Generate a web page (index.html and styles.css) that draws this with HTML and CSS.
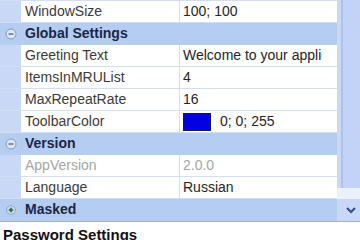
FILE: index.html
```html
<!DOCTYPE html>
<html>
<head>
<meta charset="utf-8">
<link rel="stylesheet" href="styles.css">
</head>
<body>
<div class="pg">
  <div class="top">
    <div class="grid">
      <div class="row">
        <div class="gut"></div>
        <div class="name">WindowSize</div>
        <div class="val">100; 100</div>
      </div>
      <div class="row cat">
        <div class="gut"><svg class="tog" width="12" height="12" viewBox="0 0 12 12"><circle cx="6" cy="6" r="5" fill="#dde6f7" stroke="#8596b8"/><path d="M3.5 6h5" stroke="#50627f" stroke-width="1.3"/></svg></div>
        <div class="cname">Global Settings</div>
      </div>
      <div class="row">
        <div class="gut"></div>
        <div class="name">Greeting Text</div>
        <div class="val"><span class="clip">Welcome to your application</span></div>
      </div>
      <div class="row">
        <div class="gut"></div>
        <div class="name">ItemsInMRUList</div>
        <div class="val">4</div>
      </div>
      <div class="row">
        <div class="gut"></div>
        <div class="name">MaxRepeatRate</div>
        <div class="val">16</div>
      </div>
      <div class="row">
        <div class="gut"></div>
        <div class="name">ToolbarColor</div>
        <div class="val"><span class="swatch"></span><span>0; 0; 255</span></div>
      </div>
      <div class="row cat">
        <div class="gut"><svg class="tog" width="12" height="12" viewBox="0 0 12 12"><circle cx="6" cy="6" r="5" fill="#dde6f7" stroke="#8596b8"/><path d="M3.5 6h5" stroke="#50627f" stroke-width="1.3"/></svg></div>
        <div class="cname">Version</div>
      </div>
      <div class="row">
        <div class="gut"></div>
        <div class="name dis">AppVersion</div>
        <div class="val dis">2.0.0</div>
      </div>
      <div class="row">
        <div class="gut"></div>
        <div class="name">Language</div>
        <div class="val">Russian</div>
      </div>
      <div class="row cat">
        <div class="gut"><svg class="tog" width="12" height="12" viewBox="0 0 12 12"><circle cx="6" cy="6" r="4.5" fill="#c6d5ee" stroke="#9aaac6"/><path d="M3.8 6h4.4M6 3.8v4.4" stroke="#2f6a3a" stroke-width="1.6"/></svg></div>
        <div class="cname">Masked</div>
      </div>
    </div>
    <div class="sb">
      <div class="thumb"></div>
      <div class="track"></div>
      <div class="btn"><svg width="12" height="9" viewBox="0 0 12 9"><path d="M2 2l4 4 4-4" fill="none" stroke="#34508c" stroke-width="2.2"/></svg></div>
    </div>
  </div>
  <div class="gap"></div>
  <div class="desc">
    <div class="dtitle">Password Settings</div>
  </div>
</div>
</body>
</html>
```
FILE: styles.css
```css
html, body {
  margin: 0;
  padding: 0;
}
body {
  width: 360px;
  height: 240px;
  overflow: hidden;
  background: #ffffff;
  font-family: "Liberation Sans", Arial, sans-serif;
  font-size: 14px;
}
.pg {
  display: flex;
  flex-direction: column;
  width: 360px;
  height: 240px;
}
.top {
  display: flex;
  height: 222px;
}
.grid {
  width: 337px;
  display: flex;
  flex-direction: column;
  border-top: 1px solid #d3def4;
  background: #c9d8f4;
}
.row {
  display: grid;
  grid-template-columns: 21px 159px 1fr;
  height: 21px;
  border-bottom: 1px solid #d3def4;
  line-height: 21px;
  background: #ffffff;
  color: #3b3b3b;
}
.gut {
  background: #c9d8f4;
  display: flex;
  align-items: center;
  justify-content: center;
}
.name {
  padding-left: 4px;
  border-right: 1px solid #d3def4;
  white-space: nowrap;
  overflow: hidden;
}
.val {
  padding-left: 3px;
  white-space: nowrap;
  overflow: hidden;
  color: #262626;
  display: flex;
  align-items: center;
}
.clip {
  display: block;
  width: 139px;
  overflow: hidden;
  white-space: nowrap;
}
.dis {
  color: #a6a6a6;
}
.cat {
  background: #b6cdf2;
  grid-template-columns: 21px 1fr;
  border-bottom-color: #b6cdf2;
}
.cat .gut {
  background: #b6cdf2;
}
.cname {
  padding-left: 4px;
  font-weight: bold;
  color: #1a2646;
}
.tog {
  display: block;
}
.swatch {
  width: 26px;
  height: 16px;
  background: #0000e0;
  border: 1px solid #1a1a40;
  margin-right: 9px;
}
.sb {
  width: 23px;
  display: flex;
  flex-direction: column;
  background: #c9d8f4;
}
.thumb {
  height: 188px;
  margin-left: 4px;
  background: #c2d3f7;
  border-left: 2px solid #aec2ec;
}
.track {
  flex: 1;
  background: #eaf0fc;
}
.btn {
  height: 22px;
  margin-left: 4px;
  background: #c9d8f6;
  display: flex;
  align-items: center;
  justify-content: center;
}
.gap {
  height: 6px;
  background: #eef2fb;
  border-bottom: 1px solid #a9adb6;
}
.desc {
  flex: 1;
  background: #ffffff;
  padding: 4px 0 0 3px;
}
.dtitle {
  font-weight: bold;
  font-size: 15px;
  line-height: 18px;
  color: #111111;
}
```
